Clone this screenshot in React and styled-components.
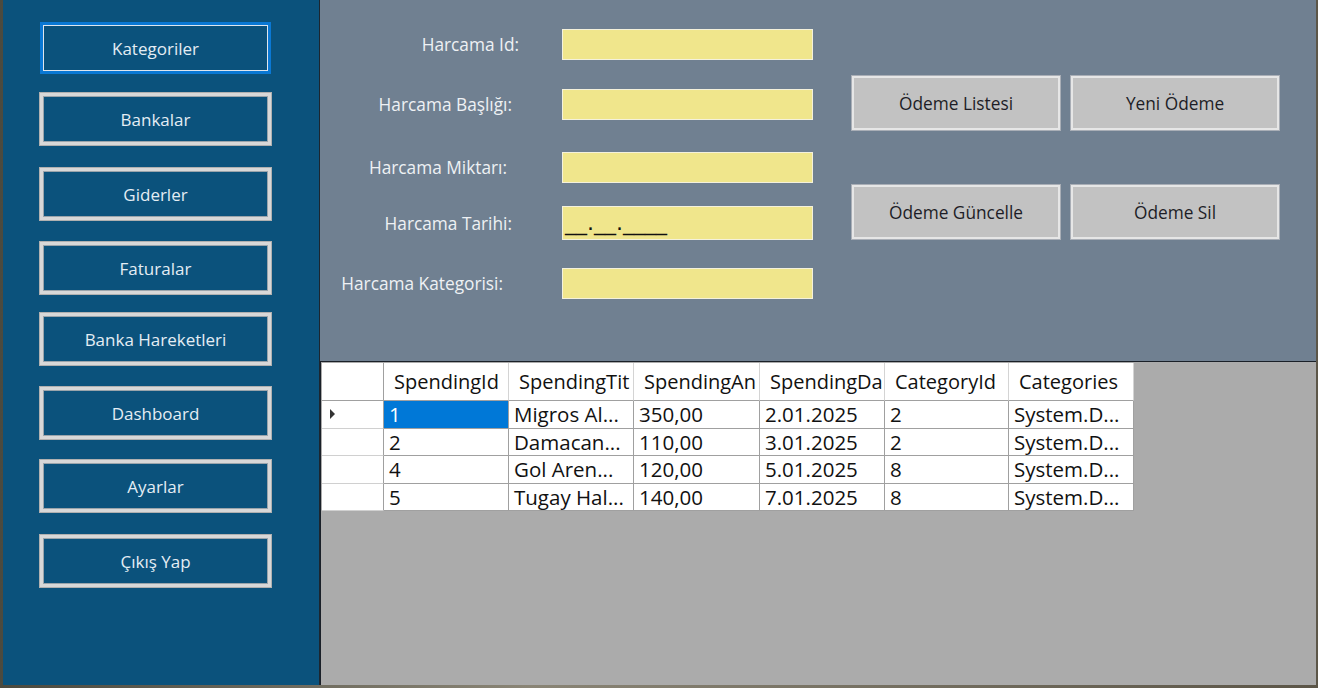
import React from "react";
import styled, { createGlobalStyle } from "styled-components";

const GlobalStyle = createGlobalStyle`
    html, body {
        margin: 0;
        padding: 0;
        width: 1318px;
        height: 688px;
        overflow: hidden;
        background: linear-gradient(90deg, #4b4a3f, #8a8576 40%, #5c5648);
    }
    * { box-sizing: border-box; }
`;

const menuItems = [
    { label: "Kategoriler", mt: 22, focused: true },
    { label: "Bankalar", mt: 19 },
    { label: "Giderler", mt: 23 },
    { label: "Faturalar", mt: 22 },
    { label: "Banka Hareketleri", mt: 19 },
    { label: "Dashboard", mt: 22 },
    { label: "Ayarlar", mt: 21 },
    { label: "Çıkış Yap", mt: 23 },
];

const fields = [
    { label: "Harcama Id:", pr: 11, mt: 29, h: 31 },
    { label: "Harcama Başlığı:", pr: 18, mt: 29, h: 31 },
    { label: "Harcama Miktarı:", pr: 23, mt: 32, h: 31 },
    { label: "Harcama Tarihi:", pr: 18, mt: 23, h: 34, mask: "__.__.____" },
    { label: "Harcama Kategorisi:", pr: 27, mt: 28, h: 31 },
];

const columns = ["SpendingId", "SpendingTit", "SpendingAn", "SpendingDa", "CategoryId", "Categories"];
const colWidths = [125, 125, 126, 125, 124, 125];

const rows = [
    ["1", "Migros Al...", "350,00", "2.01.2025", "2", "System.D..."],
    ["2", "Damacan...", "110,00", "3.01.2025", "2", "System.D..."],
    ["4", "Gol Aren...", "120,00", "5.01.2025", "8", "System.D..."],
    ["5", "Tugay Hal...", "140,00", "7.01.2025", "8", "System.D..."],
];

export default function App() {
    return (
        <>
            <GlobalStyle />
            <Window>
                <Sidebar>
                    {menuItems.map((item) => (
                        <MenuButton key={item.label} $mt={item.mt} $focused={item.focused}>
                            {item.label}
                        </MenuButton>
                    ))}
                </Sidebar>
                <Main>
                    <TopPanel>
                        <Form>
                            {fields.map((f) => (
                                <FormRow key={f.label} $mt={f.mt}>
                                    <Label $pr={f.pr}>{f.label}</Label>
                                    <Field $h={f.h}>{f.mask && <Mask>{f.mask}</Mask>}</Field>
                                </FormRow>
                            ))}
                        </Form>
                        <Actions>
                            <ActionButton>Ödeme Listesi</ActionButton>
                            <ActionButton>Yeni Ödeme</ActionButton>
                            <ActionButton>Ödeme Güncelle</ActionButton>
                            <ActionButton>Ödeme Sil</ActionButton>
                        </Actions>
                    </TopPanel>
                    <GridArea>
                        <Table>
                            <HeaderRow>
                                <RowHeadCell $head />
                                {columns.map((c, i) => (
                                    <HeadCell key={c} style={{ width: colWidths[i] }}>{c}</HeadCell>
                                ))}
                            </HeaderRow>
                            {rows.map((r, ri) => (
                                <DataRow key={ri}>
                                    <RowHeadCell>{ri === 0 && <Arrow />}</RowHeadCell>
                                    {r.map((v, ci) => (
                                        <Cell key={ci} style={{ width: colWidths[ci] }} $selected={ri === 0 && ci === 0}>
                                            {v}
                                        </Cell>
                                    ))}
                                </DataRow>
                            ))}
                        </Table>
                    </GridArea>
                </Main>
            </Window>
        </>
    );
}

const Window = styled.div`
    margin-left: 3px;
    width: 1313px;
    height: 685px;
    display: flex;
    font-family: "Open Sans", "Noto Sans", sans-serif;
`;

const Sidebar = styled.div`
    width: 317px;
    height: 100%;
    background-color: #0b527c;
    border-right: 1px solid #1c2630;
    display: flex;
    flex-direction: column;
    padding-left: 37px;
`;

const MenuButton = styled.div`
    margin-top: ${(p) => p.$mt}px;
    width: 231px;
    height: 52px;
    display: flex;
    justify-content: center;
    align-items: center;
    color: #e4edf4;
    font-size: 17px;
    background-color: #0b527c;
    border: 3px solid ${(p) => (p.$focused ? "#0a78d4" : "#d8d8d8")};
    box-shadow: ${(p) => (p.$focused ? "inset 0 0 0 1px #dfe6ee" : "inset 0 0 0 1px #9aa4ab, 0 0 0 1px #b0b0b0")};
`;

const Main = styled.div`
    flex: 1;
    display: flex;
    flex-direction: column;
`;

const TopPanel = styled.div`
    height: 362px;
    background-color: #708091;
    display: flex;
    border-bottom: 1px solid #1a2028;
`;

const Form = styled.div`
    width: 493px;
    display: flex;
    flex-direction: column;
`;

const FormRow = styled.div`
    margin-top: ${(p) => p.$mt}px;
    display: flex;
    align-items: center;
`;

const Label = styled.div`
    width: 210px;
    padding-right: ${(p) => p.$pr}px;
    text-align: right;
    color: #eef1f4;
    font-size: 17.3px;
    margin-right: 32px;
    white-space: nowrap;
`;

const Field = styled.div`
    width: 251px;
    height: ${(p) => p.$h}px;
    background-color: #f0e68c;
    border: 1px solid #f4f1dc;
    display: flex;
    align-items: flex-end;
    padding: 0 0 5px 2px;
`;

const Mask = styled.span`
    font-family: "DejaVu Sans", sans-serif;
    color: #111;
    font-size: 22px;
    line-height: 1;
`;

const Actions = styled.div`
    margin-left: 39px;
    margin-top: 76px;
    display: grid;
    grid-template-columns: 208px 208px;
    grid-auto-rows: 54px;
    column-gap: 11px;
    row-gap: 55px;
    align-content: start;
`;

const ActionButton = styled.div`
    background-color: #c2c2c2;
    border: 2px solid #e6e6e6;
    box-shadow: 0 0 0 1px #a9aeb6;
    display: flex;
    justify-content: center;
    align-items: center;
    color: #1d1d26;
    font-size: 17.3px;
`;

const GridArea = styled.div`
    flex: 1;
    background-color: #ababab;
    padding: 1px 0 0 1px;
    border-left: 1px solid #1a2028;
`;

const Table = styled.div`
    display: flex;
    flex-direction: column;
    width: fit-content;
    font-size: 20.5px;
    color: #111;
`;

const HeaderRow = styled.div`
    display: flex;
    height: 38px;
    background: #fff;
    font-size: 20px;
`;

const DataRow = styled.div`
    display: flex;
    height: 27.5px;
    background: #fff;
`;

const HeadCell = styled.div`
    border-right: 1px solid #d4d4d4;
    border-bottom: 1px solid #a0a0a0;
    display: flex;
    align-items: center;
    padding-left: 10px;
    white-space: nowrap;
    overflow: hidden;
`;

const RowHeadCell = styled.div`
    width: 62px;
    flex: none;
    background: #fff;
    border-right: 1px solid #a0a0a0;
    border-bottom: 1px solid ${(p) => (p.$head ? "#a0a0a0" : "#d0d0d0")};
    display: flex;
    align-items: center;
    padding-left: 8px;
`;

const Cell = styled.div`
    border-right: 1px solid #a0a0a0;
    border-bottom: 1px solid #a0a0a0;
    display: flex;
    align-items: center;
    padding-left: 5px;
    white-space: nowrap;
    overflow: hidden;
    background: ${(p) => (p.$selected ? "#0078d7" : "#fff")};
    color: ${(p) => (p.$selected ? "#fff" : "#111")};
`;

const Arrow = styled.span`
    width: 0;
    height: 0;
    border-top: 5px solid transparent;
    border-bottom: 5px solid transparent;
    border-left: 5px solid #333;
`;
